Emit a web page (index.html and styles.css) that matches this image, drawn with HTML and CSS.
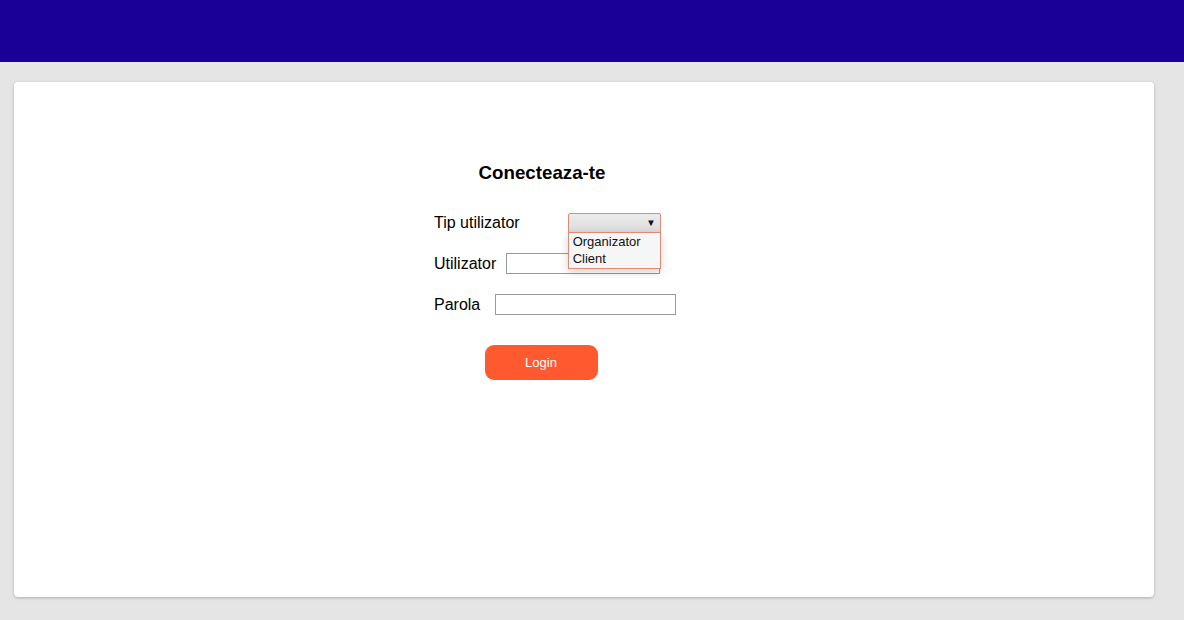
FILE: index.html
```html
<!DOCTYPE html>
<html>
<head>
<meta charset="utf-8">
<link rel="stylesheet" href="styles.css">
</head>
<body>
<header class="topbar"></header>
<main class="page">
  <section class="card">
    <form class="login">
      <h3 class="title">Conecteaza-te</h3>
      <div class="row row-type">
        <span class="label">Tip utilizator</span>
        <div class="select">
          <div class="select-box"><span class="arrow">▼</span></div>
          <ul class="options">
            <li>Organizator</li>
            <li>Client</li>
          </ul>
        </div>
      </div>
      <div class="row row-user">
        <span class="label">Utilizator</span>
        <input class="input input-user" type="text">
      </div>
      <div class="row row-pass">
        <span class="label">Parola</span>
        <input class="input input-pass" type="password">
      </div>
      <div class="actions">
        <button class="btn" type="button">Login</button>
      </div>
    </form>
  </section>
</main>
</body>
</html>
```
FILE: styles.css
```css
* { box-sizing: border-box; }
html, body { margin: 0; padding: 0; }
body {
  background: #e5e5e5;
  font-family: "Liberation Sans", Arial, sans-serif;
  color: #000;
  width: 1184px;
  height: 620px;
  overflow: hidden;
}
.topbar {
  height: 62px;
  background: #1a0096;
}
.page {
  padding: 20px 30px 0 14px;
}
.card {
  width: 1140px;
  height: 515px;
  background: #fff;
  border-radius: 4px;
  box-shadow: 0 1px 3px rgba(0,0,0,0.25);
  padding: 80px 0 0 420px;
}
.login {
  width: 216px;
}
.title {
  margin: 0 0 29px 0;
  font-size: 18.72px;
  font-weight: bold;
  text-align: center;
  line-height: 22px;
}
.row {
  display: flex;
  align-items: center;
  font-size: 16px;
  line-height: 18px;
}
.row > * { flex-shrink: 0; }
.label { white-space: nowrap; }
.row-type { height: 20px; }
.row-type .label { margin-right: 48px; }
.row-user { margin-top: 20px; height: 21px; }
.row-user .label { margin-right: 10px; }
.row-pass { margin-top: 20px; height: 21px; }
.row-pass .label { margin-right: 15px; }
.select {
  position: relative;
  width: 93px;
  height: 20px;
}
.select-box {
  height: 20px;
  border: 1px solid #e08a76;
  border-radius: 2px;
  background: linear-gradient(#ececec, #dbdbdb);
  display: flex;
  justify-content: flex-end;
  align-items: center;
  padding-right: 4px;
}
.arrow { font-size: 9.5px; line-height: 10px; color: #111; }
.options {
  position: absolute;
  left: 0;
  top: 19px;
  width: 93px;
  margin: 0;
  padding: 0 0 1px 0;
  list-style: none;
  background: #f6f6f6;
  border: 1px solid #e08a76;
  box-shadow: 0 3px 8px rgba(0,0,0,0.18);
  font-size: 13px;
  line-height: 17px;
  z-index: 2;
}
.options li { padding-left: 4px; color: #111; }
.input {
  height: 21px;
  border: 1px solid #999;
  padding: 0 2px;
  margin: 0;
  background: #fff;
  font: inherit;
}
.input-user { width: 154px; }
.input-pass { width: 181px; }
.actions {
  margin-top: 30px;
  display: flex;
  justify-content: center;
  padding-right: 2px;
}
.btn {
  width: 113px;
  height: 35px;
  border: none;
  border-radius: 9px;
  background: #ff5a2f;
  color: #fff;
  font-family: "Liberation Sans", Arial, sans-serif;
  font-size: 13px;
}
```
